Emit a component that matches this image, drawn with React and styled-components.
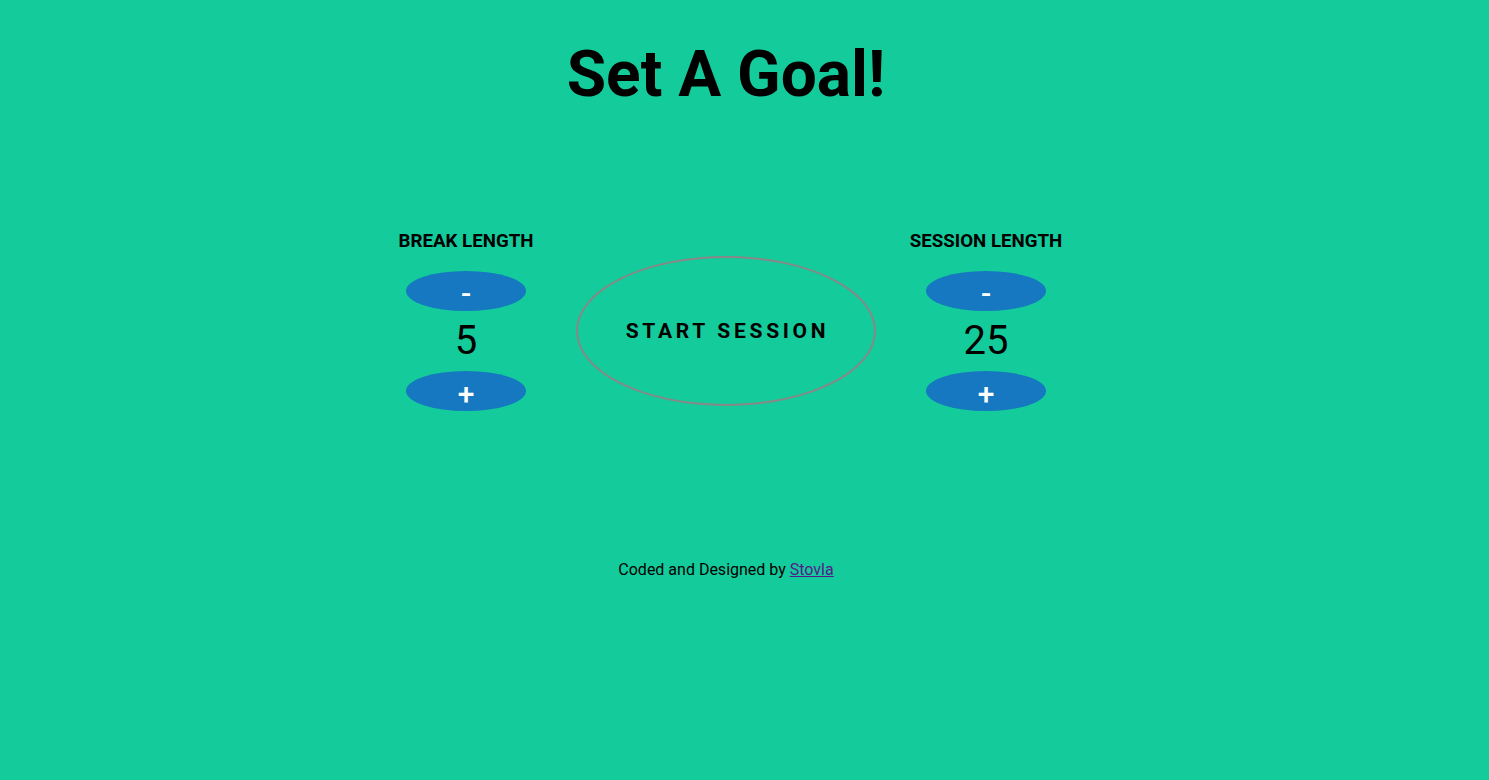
import React, { useState } from "react";
import styled, { createGlobalStyle } from "styled-components";

const GlobalStyle = createGlobalStyle`
    html, body {
        margin: 0;
        background-color: #13cb9b;
        font-family: Roboto, "Liberation Sans", sans-serif;
        color: #000;
    }
`;

const Page = styled.div`
    min-height: 780px;
    padding-right: 37px;
    display: flex;
    flex-direction: column;
    align-items: center;
`;

const Title = styled.h1`
    margin: 0;
    padding-top: 37px;
    font-size: 64px;
    line-height: 75px;
    font-weight: 700;
`;

const Row = styled.div`
    margin-top: 119px;
    display: flex;
    align-items: flex-start;
    gap: 30px;
`;

const Column = styled.div`
    width: 160px;
    display: flex;
    flex-direction: column;
    align-items: center;
`;

const Label = styled.div`
    font-size: 18.72px;
    line-height: 21px;
    font-weight: 700;
    margin-bottom: 19px;
    white-space: nowrap;
`;

const RoundButton = styled.button`
    width: 120px;
    height: 40px;
    border: none;
    border-radius: 50%;
    background-color: #1578c0;
    color: white;
    font-family: Roboto, "Liberation Sans", sans-serif;
    font-size: 30px;
    font-weight: 500;
    line-height: 40px;
    padding: 3px 0 0;
    cursor: pointer;
`;

const Value = styled.div`
    height: 60px;
    line-height: 60px;
    font-size: 40px;
    font-weight: 400;
`;

const StartButton = styled.button`
    margin-top: 25px;
    width: 300px;
    height: 150px;
    box-sizing: border-box;
    border: 2px solid #888888;
    border-radius: 50%;
    background: transparent;
    font-family: Roboto, "Liberation Sans", sans-serif;
    font-size: 21px;
    font-weight: 700;
    letter-spacing: 3.7px;
    padding: 0 0 0 3px;
    color: #000;
    cursor: pointer;
`;

const Footer = styled.div`
    margin-top: 149px;
    font-size: 16px;
    line-height: 19px;
`;

const Link = styled.a`
    color: #551a8b;
`;

const Counter = ({ label, value, onDec, onInc }) => (
    <Column>
        <Label>{label}</Label>
        <RoundButton onClick={onDec}>-</RoundButton>
        <Value>{value}</Value>
        <RoundButton onClick={onInc}>+</RoundButton>
    </Column>
);

const App = () => {
    const [breakLen, setBreakLen] = useState(5);
    const [sessionLen, setSessionLen] = useState(25);

    return (
        <Page>
            <GlobalStyle />
            <Title>Set A Goal!</Title>
            <Row>
                <Counter
                    label="BREAK LENGTH"
                    value={breakLen}
                    onDec={() => setBreakLen(Math.max(1, breakLen - 1))}
                    onInc={() => setBreakLen(breakLen + 1)}
                />
                <StartButton>START SESSION</StartButton>
                <Counter
                    label="SESSION LENGTH"
                    value={sessionLen}
                    onDec={() => setSessionLen(Math.max(1, sessionLen - 1))}
                    onInc={() => setSessionLen(sessionLen + 1)}
                />
            </Row>
            <Footer>
                Coded and Designed by <Link href="#">Stovla</Link>
            </Footer>
        </Page>
    );
};

export default App;
